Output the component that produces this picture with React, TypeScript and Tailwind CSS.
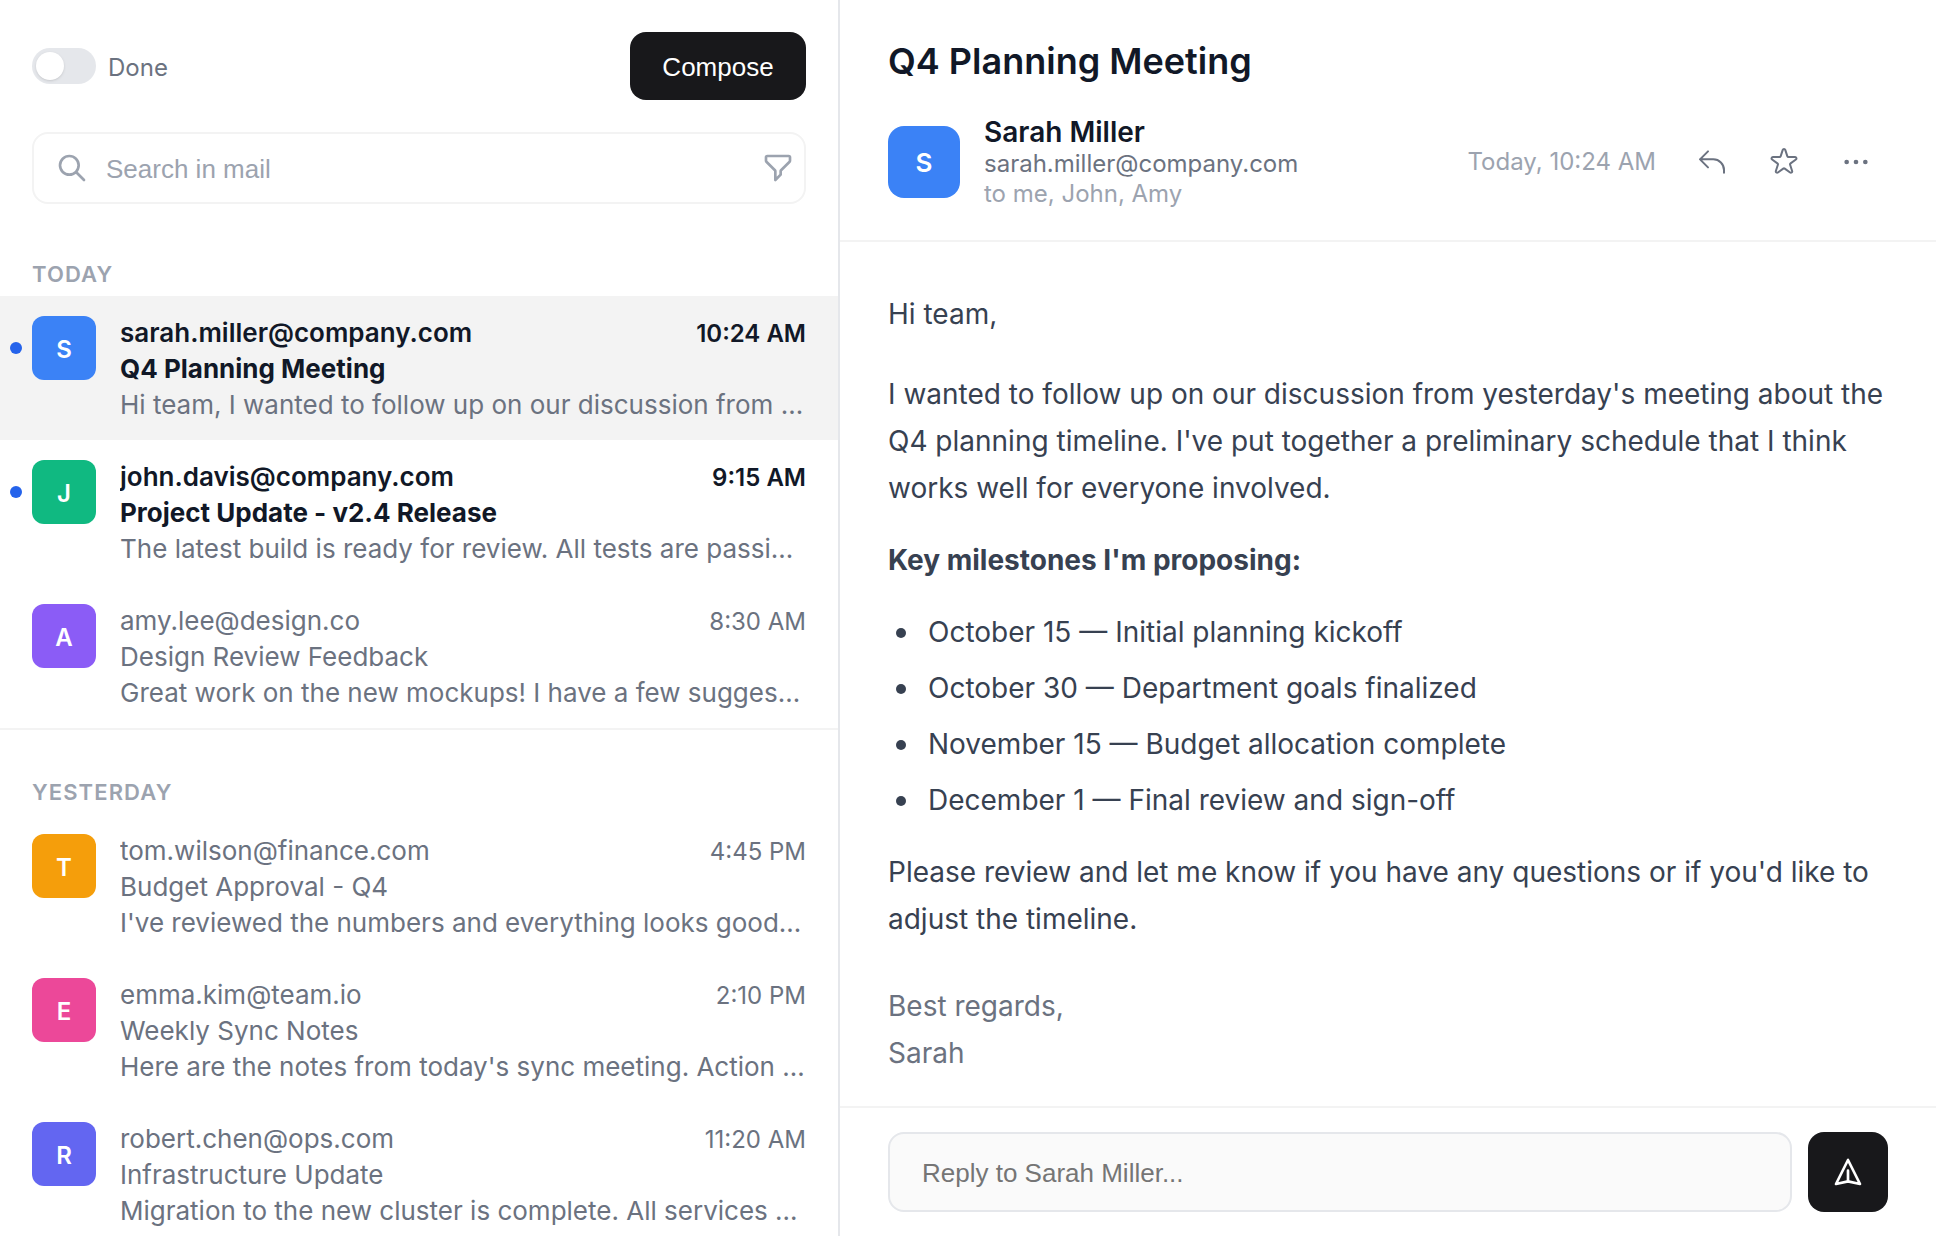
import type { ReactNode } from "react";
import clsx from "clsx";

interface Mail {
  from: string;
  subject: string;
  preview: string;
  time: string;
  color: string;
  unread?: boolean;
  selected?: boolean;
}

const SECTIONS: { title: string; mails: Mail[] }[] = [
  {
    title: "Today",
    mails: [
      {
        from: "sarah.miller@company.com",
        subject: "Q4 Planning Meeting",
        preview: "Hi team, I wanted to follow up on our discussion from yesterday's meeting",
        time: "10:24 AM",
        color: "bg-[#3b82f6]",
        unread: true,
        selected: true,
      },
      {
        from: "john.davis@company.com",
        subject: "Project Update - v2.4 Release",
        preview: "The latest build is ready for review. All tests are passing and ready",
        time: "9:15 AM",
        color: "bg-[#10b981]",
        unread: true,
      },
      {
        from: "amy.lee@design.co",
        subject: "Design Review Feedback",
        preview: "Great work on the new mockups! I have a few suggestions",
        time: "8:30 AM",
        color: "bg-[#8b5cf6]",
      },
    ],
  },
  {
    title: "Yesterday",
    mails: [
      {
        from: "tom.wilson@finance.com",
        subject: "Budget Approval - Q4",
        preview: "I've reviewed the numbers and everything looks good. Approved",
        time: "4:45 PM",
        color: "bg-[#f59e0b]",
      },
      {
        from: "emma.kim@team.io",
        subject: "Weekly Sync Notes",
        preview: "Here are the notes from today's sync meeting. Action items",
        time: "2:10 PM",
        color: "bg-[#ec4899]",
      },
      {
        from: "robert.chen@ops.com",
        subject: "Infrastructure Update",
        preview: "Migration to the new cluster is complete. All services running",
        time: "11:20 AM",
        color: "bg-[#6366f1]",
      },
    ],
  },
];

const MILESTONES = [
  "October 15 — Initial planning kickoff",
  "October 30 — Department goals finalized",
  "November 15 — Budget allocation complete",
  "December 1 — Final review and sign-off",
];

const ICONS = {
  search: "M21 21l-6-6m2-5a7 7 0 11-14 0 7 7 0 0114 0z",
  filter:
    "M3 4a1 1 0 011-1h16a1 1 0 011 1v2.586a1 1 0 01-.293.707l-6.414 6.414a1 1 0 00-.293.707V17l-4 4v-6.586a1 1 0 00-.293-.707L3.293 7.293A1 1 0 013 6.586V4z",
  reply: "M3 10h10a8 8 0 018 8v2M3 10l6 6m-6-6l6-6",
  star: "M11.049 2.927c.3-.921 1.603-.921 1.902 0l1.519 4.674a1 1 0 00.95.69h4.915c.969 0 1.371 1.24.588 1.81l-3.976 2.888a1 1 0 00-.363 1.118l1.518 4.674c.3.922-.755 1.688-1.538 1.118l-3.976-2.888a1 1 0 00-1.176 0l-3.976 2.888c-.783.57-1.838-.197-1.538-1.118l1.518-4.674a1 1 0 00-.363-1.118l-3.976-2.888c-.784-.57-.38-1.81.588-1.81h4.914a1 1 0 00.951-.69l1.519-4.674z",
  more: "M5 12h.01M12 12h.01M19 12h.01M6 12a1 1 0 11-2 0 1 1 0 012 0zm7 0a1 1 0 11-2 0 1 1 0 012 0zm7 0a1 1 0 11-2 0 1 1 0 012 0z",
  send: "M12 19l9 2-9-18-9 18 9-2zm0 0v-8",
};

function Icon({ name, strokeWidth = 2 }: { name: keyof typeof ICONS; strokeWidth?: number }) {
  return (
    <svg
      className="size-8 shrink-0"
      viewBox="0 0 24 24"
      fill="none"
      stroke="currentColor"
      strokeWidth={strokeWidth}
      strokeLinecap="round"
      strokeLinejoin="round"
      aria-hidden="true"
    >
      <path d={ICONS[name]} />
    </svg>
  );
}

function IconButton({ label, children }: { label: string; children: ReactNode }) {
  return (
    <button type="button" aria-label={label} className="flex size-16 items-center justify-center rounded-xl text-[#6b7280]">
      {children}
    </button>
  );
}

function MailRow({ mail }: { mail: Mail }) {
  const strong = mail.unread ? "font-semibold text-[#111827]" : "text-[#6b7280]";

  return (
    <li className={clsx("relative flex gap-6 px-8 pt-5 pb-4", mail.selected && "bg-[#f3f3f3]")}>
      {/* Unread dot */}
      {mail.unread && <span className="absolute top-[46px] left-[10px] size-3 rounded-full bg-[#2563eb]" />}

      <div
        className={clsx(
          "flex size-16 shrink-0 items-center justify-center rounded-xl pt-[3px] text-2xl font-semibold text-white",
          mail.color
        )}
      >
        {mail.from[0].toUpperCase()}
      </div>

      <div className="-mt-px mb-px min-w-0 flex-1 text-[26px] leading-9">
        <div className="flex h-9 items-baseline justify-between gap-4">
          <span className={clsx("truncate", strong)}>{mail.from}</span>
          <span className={clsx("shrink-0 text-2xl leading-9", strong)}>{mail.time}</span>
        </div>
        <div className={clsx("truncate", mail.unread ? "font-bold text-[#111827]" : "text-[#6b7280]")}>
          {mail.subject}
        </div>
        <p className="truncate text-[#6b7280]">{mail.preview}</p>
      </div>
    </li>
  );
}

function Sidebar() {
  return (
    <aside className="flex w-[840px] shrink-0 flex-col overflow-hidden border-r-2 border-[#e5e7eb]">
      <header className="flex flex-col gap-8 px-8 pt-8 pb-2">
        <div className="flex items-center justify-between">
          <label className="flex items-center gap-3 text-2xl text-[#6b7280]">
            <input type="checkbox" role="switch" className="peer sr-only" />
            <span className="flex h-9 w-16 items-center rounded-full bg-[#e5e7eb] p-1 peer-checked:justify-end">
              <span className="size-7 rounded-full bg-white shadow" />
            </span>
            <span className="pt-[3px]">Done</span>
          </label>
          <button
            type="button"
            className="h-[68px] w-44 rounded-2xl bg-[#18181b] pt-[3px] font-['Liberation_Sans',Arial,sans-serif] text-[26px] text-white"
          >
            Compose
          </button>
        </div>

        {/* Search */}
        <div className="flex h-[72px] items-center gap-[18px] rounded-2xl border-2 border-[#f3f3f3] pr-[10px] pl-[22px] text-[#9ca3af]">
          <Icon name="search" />
          <input
            type="search"
            aria-label="Search in mail"
            placeholder="Search in mail"
            className="min-w-0 flex-1 pt-[3px] font-['Liberation_Sans',Arial,sans-serif] text-[26px] outline-none placeholder:text-[#9ca3af]"
          />
          <button type="button" aria-label="Filter">
            <Icon name="filter" />
          </button>
        </div>
      </header>

      {SECTIONS.map((section) => (
        <section key={section.title} className="border-b-2 border-[#f3f3f3] last:border-b-0">
          <h2 className="px-8 pt-12 pb-2 text-[22px] leading-7 font-semibold tracking-wider text-[#9ca3af] uppercase">
            {section.title}
          </h2>
          <ul>
            {section.mails.map((mail) => (
              <MailRow key={mail.from} mail={mail} />
            ))}
          </ul>
        </section>
      ))}
    </aside>
  );
}

function Reader() {
  return (
    <main className="flex min-w-0 flex-1 flex-col">
      <header className="border-b-2 border-[#f3f3f3] px-12 pt-10 pb-[31px]">
        <h1 className="text-4xl leading-[43px] font-semibold text-[#111827]">Q4 Planning Meeting</h1>
        <div className="mt-8 flex items-center gap-6">
          <div className="flex size-[72px] shrink-0 items-center justify-center rounded-2xl bg-[#3b82f6] text-[26px] font-semibold text-white">
            S
          </div>
          <div className="min-w-0 flex-1 text-2xl leading-[30px]">
            <div className="text-[28px] leading-[34px] font-semibold text-[#111827]">Sarah Miller</div>
            <div className="text-[#6b7280]">sarah.miller@company.com</div>
            <div className="text-[#9ca3af]">to me, John, Amy</div>
          </div>
          <time className="text-2xl text-[#9ca3af]">Today, 10:24 AM</time>
          <div className="flex gap-2">
            <IconButton label="Reply">
              <Icon name="reply" strokeWidth={1.5} />
            </IconButton>
            <IconButton label="Star">
              <Icon name="star" strokeWidth={1.5} />
            </IconButton>
            <IconButton label="More">
              <Icon name="more" strokeWidth={1.5} />
            </IconButton>
          </div>
        </div>
      </header>

      {/* Message */}
      <article className="flex-1 overflow-hidden px-12 pt-[49px] text-[28px] leading-[47px] text-[#374151]">
        <p>Hi team,</p>
        <p className="mt-[33px]">
          I wanted to follow up on our discussion from yesterday's meeting about the Q4 planning timeline. I've put
          together a preliminary schedule that I think works well for everyone involved.
        </p>
        <p className="mt-[25px] font-bold">Key milestones I'm proposing:</p>
        <ul className="mt-[25px] flex flex-col gap-[9px] pl-2">
          {MILESTONES.map((item) => (
            <li
              key={item}
              className="flex items-center gap-[22px] before:size-[10px] before:shrink-0 before:rounded-full before:bg-current"
            >
              {item}
            </li>
          ))}
        </ul>
        <p className="mt-[25px]">
          Please review and let me know if you have any questions or if you'd like to adjust the timeline.
        </p>
        <p className="mt-10 text-[#6b7280]">
          Best regards,
          <br />
          Sarah
        </p>
      </article>

      {/* Reply bar */}
      <form className="flex gap-4 border-t-2 border-[#f3f3f3] px-12 py-6" onSubmit={(e) => e.preventDefault()}>
        <input
          type="text"
          aria-label="Reply to Sarah Miller"
          placeholder="Reply to Sarah Miller..."
          className="h-20 min-w-0 flex-1 rounded-2xl border-2 border-[#e5e7eb] bg-[#fafafa] px-8 pt-[3px] font-['Liberation_Sans',Arial,sans-serif] text-[26px] outline-none placeholder:text-[#757575]"
        />
        <button
          type="submit"
          aria-label="Send"
          className="flex size-20 shrink-0 items-center justify-center rounded-2xl bg-[#18181b] text-white"
        >
          <Icon name="send" />
        </button>
      </form>
    </main>
  );
}

export default function App() {
  return (
    <div className="flex h-screen overflow-hidden bg-white font-['Inter',sans-serif]">
      <Sidebar />
      <Reader />
    </div>
  );
}
